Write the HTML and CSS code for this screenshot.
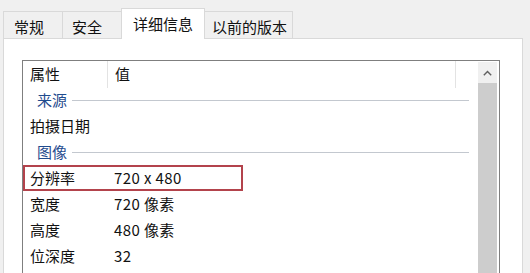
FILE: index.html
```html
<!DOCTYPE html>
<html lang="zh-CN">
<head>
<meta charset="utf-8">
<title>属性 - 详细信息</title>
<link rel="stylesheet" href="styles.css">
</head>
<body>
<div class="dialog">
  <div class="tabs">
    <div class="tab t1">常规</div>
    <div class="tab t2">安全</div>
    <div class="tab t3 active">详细信息</div>
    <div class="tab t4">以前的版本</div>
  </div>
  <div class="panel">
    <div class="listbox">
      <div class="list">
        <div class="header">
          <div class="hcell c1">属性</div>
          <div class="hcell c2">值</div>
          <div class="hcell c3"></div>
        </div>
        <div class="group"><span class="glabel">来源</span><span class="gline"></span></div>
        <div class="row"><span class="k">拍摄日期</span><span class="v"></span></div>
        <div class="group"><span class="glabel">图像</span><span class="gline"></span></div>
        <div class="row highlight"><span class="k">分辨率</span><span class="v">720 x 480</span></div>
        <div class="row"><span class="k">宽度</span><span class="v">720 像素</span></div>
        <div class="row"><span class="k">高度</span><span class="v">480 像素</span></div>
        <div class="row"><span class="k">位深度</span><span class="v">32</span></div>
      </div>
      <div class="scrollbar">
        <div class="sbtn">
          <svg width="9" height="6" viewBox="0 0 9 6"><path d="M0.8 5.2 L4.5 1.5 L8.2 5.2" fill="none" stroke="#606060" stroke-width="1.4"/></svg>
        </div>
        <div class="thumb"></div>
      </div>
    </div>
  </div>
</div>
</body>
</html>
```
FILE: styles.css
```css
html, body {
  margin: 0;
  padding: 0;
  background: #f0f0f0;
  width: 530px;
  height: 273px;
  overflow: hidden;
  font-family: "Noto Sans CJK SC", "Microsoft YaHei", sans-serif;
  font-size: 15px;
  color: #111;
}

.dialog {
  padding: 8px 0 0 3px;
}

.tabs {
  display: flex;
  align-items: flex-end;
  height: 30px;
  position: relative;
  z-index: 2;
}

.tab {
  box-sizing: border-box;
  height: 27px;
  border: 1px solid #d9d9d9;
  border-bottom: none;
  margin-left: -1px;
  background: #f0f0f0;
  line-height: 27px;
  padding-top: 1px;
  white-space: nowrap;
}

.tab:first-child { margin-left: 0; }

.t1 { width: 60px; padding-left: 10px; }
.t2 { width: 60px; padding-left: 9px; }
.t3 { width: 84px; padding-left: 11px; }
.t4 { width: 89px; padding-left: 7px; }

.tab.active {
  height: 31px;
  margin-bottom: -1px;
  background: #fff;
  padding-top: 0;
  line-height: 29px;
}

.panel {
  box-sizing: border-box;
  width: 520px;
  height: 235px;
  background: #fff;
  border: 1px solid #d9d9d9;
  border-bottom: none;
  padding: 21px 0 0 18px;
}

.listbox {
  box-sizing: border-box;
  width: 478px;
  height: 214px;
  border: 1px solid #7f7f7f;
  border-bottom: none;
  display: flex;
}

.list {
  flex: 1;
}

.header {
  display: flex;
  height: 26px;
  line-height: 26px;
}

.hcell {
  box-sizing: border-box;
  height: 27px;
}

.c1 { width: 85px; padding-left: 7px; border-right: 1px solid #e3e3e3; }
.c2 { width: 348px; padding-left: 7px; border-right: 1px solid #e3e3e3; }
.c3 { flex: 1; }

.group {
  display: flex;
  align-items: center;
  height: 26px;
  padding-left: 14px;
  color: #1f4b8e;
}

.glabel {
  line-height: 26px;
  padding-right: 5px;
}

.gline {
  width: 0;
  flex: 1;
  height: 1px;
  background: #c3c8cf;
  margin-right: 9px;
}

.row {
  display: flex;
  height: 26px;
  line-height: 26px;
}

.k {
  box-sizing: border-box;
  width: 85px;
  padding-left: 7px;
}

.v {
  padding-left: 6px;
  letter-spacing: 0.4px;
}

.row.highlight {
  width: 220px;
  outline: 2px solid #b3434c;
  outline-offset: -2px;
}

.scrollbar {
  width: 19px;
  margin: 1px 2px 0 0;
  display: flex;
  flex-direction: column;
}

.sbtn {
  height: 21px;
  background: #f0f0f0;
  display: flex;
  align-items: center;
  justify-content: center;
}

.thumb {
  flex: 1;
  background: #cdcdcd;
}
```
